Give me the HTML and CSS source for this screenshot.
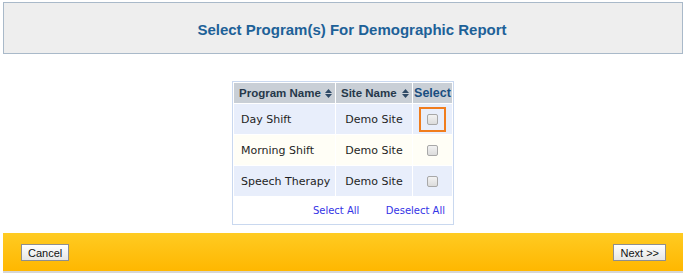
FILE: index.html
```html
<!DOCTYPE html>
<html lang="en">
<head>
    <meta charset="UTF-8">
    <title>Select Program(s) For Demographic Report</title>
    <link rel="stylesheet" href="styles.css">
</head>
<body>
    <div class="title-box">
        <h1>Select Program(s) For Demographic Report</h1>
    </div>

    <div class="grid-wrap">
        <table class="grid">
            <colgroup>
                <col class="col-prog">
                <col class="col-site">
                <col class="col-sel">
            </colgroup>
            <thead>
                <tr>
                    <th>
                        <div class="th-inner">Program Name
                            <svg class="sort" width="7" height="9" viewBox="0 0 7 9"><path d="M3.5 0L7 4H0z M0 5H7L3.5 9z" fill="#2f4a66"/></svg>
                        </div>
                    </th>
                    <th>
                        <div class="th-inner">Site Name
                            <svg class="sort" width="7" height="9" viewBox="0 0 7 9"><path d="M3.5 0L7 4H0z M0 5H7L3.5 9z" fill="#2f4a66"/></svg>
                        </div>
                    </th>
                    <th class="th-sel">Select</th>
                </tr>
            </thead>
            <tbody>
                <tr class="alt">
                    <td>Day Shift</td>
                    <td class="site">Demo Site</td>
                    <td class="sel"><span class="focus"><input type="checkbox"></span></td>
                </tr>
                <tr class="plain">
                    <td>Morning Shift</td>
                    <td class="site">Demo Site</td>
                    <td class="sel"><input type="checkbox"></td>
                </tr>
                <tr class="alt">
                    <td>Speech Therapy</td>
                    <td class="site">Demo Site</td>
                    <td class="sel"><input type="checkbox"></td>
                </tr>
                <tr class="links">
                    <td colspan="3">
                        <a href="#">Select All</a>
                        <a href="#">Deselect All</a>
                    </td>
                </tr>
            </tbody>
        </table>
    </div>

    <div class="action-bar">
        <button>Cancel</button>
        <button>Next &gt;&gt;</button>
    </div>
</body>
</html>
```

FILE: styles.css
```css
body, h1, table {
    margin: 0;
    padding: 0;
}

body {
    font-family: 'DejaVu Sans', Verdana, sans-serif;
    background-color: #ffffff;
    width: 686px;
}

.title-box {
    margin: 2px 3px 0 3px;
    height: 50px;
    border: 1px solid #a9b9c9;
    background-color: #eeeeee;
    display: flex;
    align-items: center;
    justify-content: center;
}

.title-box h1 {
    font-family: 'Liberation Sans', Arial, sans-serif;
    font-size: 15px;
    font-weight: bold;
    color: #1d6198;
    margin: 3px 0 0 18px;
}

.grid-wrap {
    display: flex;
    justify-content: center;
    margin-top: 27px;
}

.grid {
    table-layout: fixed;
    width: 222px;
    border: 1px solid #c9d8ef;
    border-spacing: 1px;
    font-size: 11px;
    color: #1e1e1e;
}

.col-prog { width: 101px; }
.col-site { width: 76px; }
.col-sel { width: 39px; }

.grid th {
    background-color: #c9cfd6;
    color: #26384a;
    font-family: 'Liberation Sans', Tahoma, sans-serif;
    font-size: 11.5px;
    font-weight: bold;
    height: 20px;
    padding: 0 3px 0 5px;
    text-align: left;
    white-space: nowrap;
}

.th-inner {
    display: flex;
    align-items: center;
    justify-content: space-between;
}

.grid th.th-sel {
    font-size: 12.5px;
    color: #1a4e80;
    padding: 0;
    text-align: center;
}

.sort {
    flex: none;
    margin-top: 1px;
}

.grid td {
    height: 30px;
    padding: 0 7px;
    white-space: nowrap;
    overflow: hidden;
}

.grid td.site {
    text-align: center;
    padding: 0;
}

.grid td.sel {
    text-align: center;
    padding: 0;
}

.grid tr.alt td {
    background-color: #e8eefb;
}

.grid tr.plain td {
    background-color: #fffef6;
}

.grid input {
    -webkit-appearance: none;
    appearance: none;
    width: 11px;
    height: 11px;
    margin: 0;
    vertical-align: middle;
    border: 1px solid #a8a8a8;
    border-radius: 2px;
    background: linear-gradient(#f2f2f2, #dcdcdc);
}

.focus {
    display: inline-block;
    padding: 5px 6px;
    border: 2px solid #f07d1e;
    line-height: 0;
}

.grid tr.links td {
    height: 26px;
    text-align: right;
    padding: 0 7px 0 0;
    background-color: #ffffff;
}

.links a {
    color: #3434e6;
    text-decoration: none;
    margin-left: 23px;
    font-size: 10px;
}

.action-bar {
    margin: 8px 3px 0 3px;
    height: 38px;
    background: linear-gradient(#ffcb22, #ffb700);
    border-bottom: 2px solid #d6d6d6;
    display: flex;
    align-items: center;
    justify-content: space-between;
    padding: 0 17px 0 18px;
}

.action-bar button {
    font-family: 'Liberation Sans', Arial, sans-serif;
    font-size: 11px;
    color: #111111;
    background: linear-gradient(#ffffff, #e6e6e6);
    border: 1px solid #8f8f8f;
    padding: 1px 6px;
    height: 17px;
    margin-top: 1px;
}
```
